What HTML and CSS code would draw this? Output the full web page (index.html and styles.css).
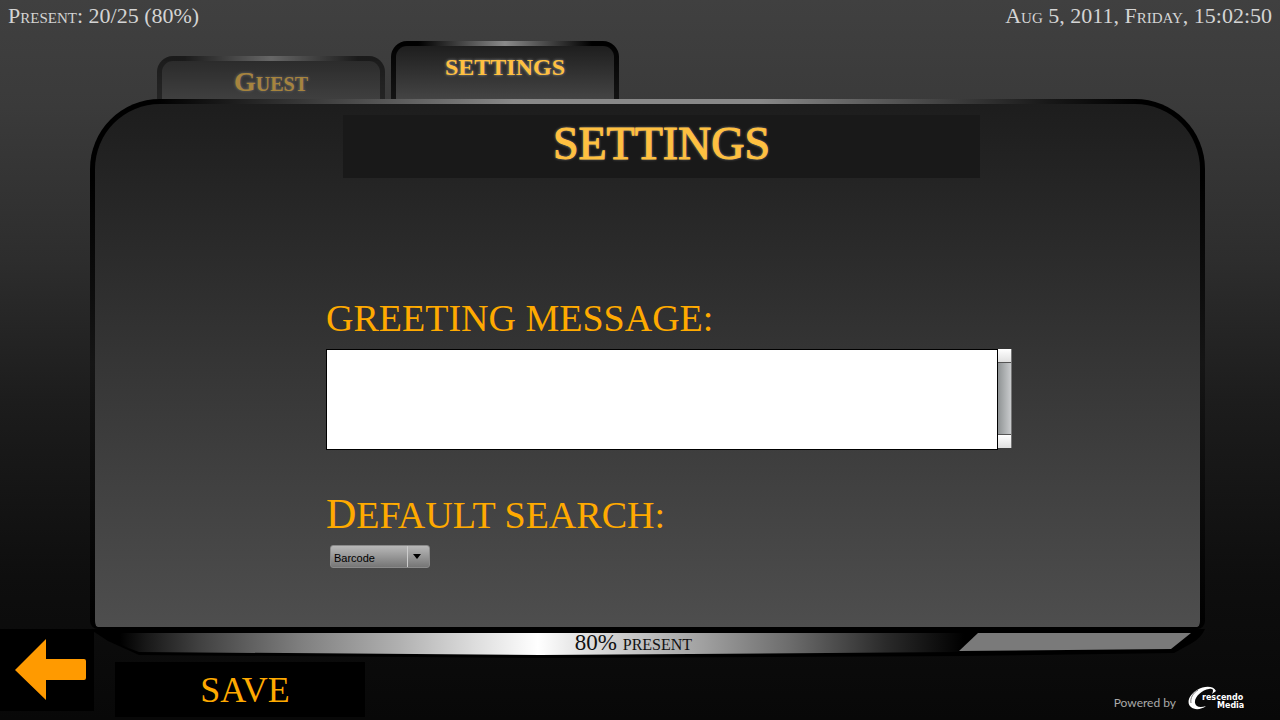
FILE: index.html
```
<!DOCTYPE html>
<html lang="en">

<head>
  <meta charset="UTF-8">
  <meta name="viewport" content="width=device-width, initial-scale=1.0">

  <title>Settings</title>
  <link rel="stylesheet" href="styles.css">
</head>

<body>

  <header class="topbar">
    <span>Present: 20/25 (80%)</span>
    <span>Aug 5, 2011, Friday, 15:02:50</span>
  </header>

  <main class="content">
    <nav class="tabs">
      <a href="#guest" class="tab">Guest</a>
      <a href="#settings" class="tab active">Settings</a>
    </nav>

    <form class="panel" id="settings">
      <h1 class="title">Settings</h1>

      <label for="greeting" class="greeting-label">Greeting message:</label>
      <div class="message">
        <textarea id="greeting" name="greeting"></textarea>
        <div class="scroll">
          <button type="button" class="scroll-but" aria-label="Scroll up"></button>
          <div class="scroll-track"></div>
          <button type="button" class="scroll-but" aria-label="Scroll down"></button>
        </div>
      </div>

      <label for="search" class="search-label">Default search:</label>
      <div class="dropdown">
        <select id="search" name="search">
          <option>Barcode</option>
        </select>
      </div>
    </form>
  </main>

  <footer class="bottom">
    <button type="button" class="back" aria-label="Back">
      <svg width="72" height="62" viewBox="0 0 72 62">
        <path d="M1 31 L32 0 V20 H70 Q72 20 72 22 V39 Q72 41 70 41 H32 V61 Z" fill="#ff9a00" />
      </svg>
    </button>

    <div class="bottom-main">
      <div class="status">
        <svg class="status-bar" viewBox="0 0 1111 30" preserveAspectRatio="none">
          <defs>
            <linearGradient id="shine" gradientUnits="userSpaceOnUse" x1="0" y1="0" x2="870" y2="0">
              <stop offset="0.03" stop-color="#000" />
              <stop offset="0.06" stop-color="#181818" />
              <stop offset="0.12" stop-color="#404040" />
              <stop offset="0.24" stop-color="#808080" />
              <stop offset="0.35" stop-color="#b0b0b0" />
              <stop offset="0.44" stop-color="#dedede" />
              <stop offset="0.51" stop-color="#fff" />
              <stop offset="0.56" stop-color="#e2e2e2" />
              <stop offset="0.7" stop-color="#a0a0a0" />
              <stop offset="0.8" stop-color="#6c6c6c" />
              <stop offset="0.91" stop-color="#2a2a2a" />
              <stop offset="1" stop-color="#000" />
            </linearGradient>
          </defs>
          <path d="M-4 0 H1111 Q1107 9 1098 14 L1080 24 L866 27 L446 29 L45 26 L14 12 Z" fill="#000" />
          <path d="M8 4 H884 L865 23 L446 26 L45 23 Q24 16 8 4 Z" fill="url(#shine)" />
          <path d="M884 4 H1097 L1077 20 L865 22 Z" fill="#7a7a7a" />
        </svg>
        <span class="status-text">80% present</span>
      </div>

      <div class="actions">
        <button type="submit" form="settings" class="save">Save</button>
        <div class="powered">
          <span>Powered by</span>
          <svg width="58" height="24" viewBox="0 0 58 24">
            <path d="M28 5 C26 0 17 -1 9 4 C1 9 -2 17 3 21 C6 24 13 24 18 20 C12 22 8 21 7 17 C6 11 14 4 21 3 C25 2 26 4 24 8 Z" fill="#fff" />
            <path d="M10 4 C5 7 2 12 3 17" fill="none" stroke="#777" stroke-width="1" />
            <text x="14" y="14" class="logo-text">rescendo</text>
            <text x="29" y="22" class="logo-text">Media</text>
          </svg>
        </div>
      </div>
    </div>
  </footer>

</body>

</html>
```
FILE: styles.css
```
* {
  margin: 0;
  padding: 0;
  box-sizing: border-box;
}

body {
  display: flex;
  flex-direction: column;
  min-height: 100vh;
  background: #080808 linear-gradient(#404040, #3a3a3a 15%, #2d2d2d 36%, #1c1c1c 56%, #0e0e0e 80%, #080808);
  font-family: "Liberation Serif", "Times New Roman", serif;
  color: #ffaa00;
}

button {
  border: none;
  font-family: inherit;
  color: inherit;
  cursor: pointer;
}

.topbar {
  display: flex;
  justify-content: space-between;
  padding: 4px 8px 0;
  height: 41px;
  font-size: 22px;
  line-height: 24px;
  font-variant: small-caps;
  color: #d4d4d4;
}

.content {
  flex: 1;
  display: flex;
  flex-direction: column;
  margin: 0 75px 0 90px;
}

/* tabs */
.tabs {
  display: flex;
  align-items: flex-end;
  gap: 6px;
  height: 58px;
  padding-left: 67px;
}

.tab {
  width: 228px;
  height: 43px;
  padding-top: 6px;
  border: 5px solid transparent;
  border-bottom: none;
  border-radius: 16px 16px 0 0;
  background:
    linear-gradient(#1e1e1e, #444) padding-box,
    linear-gradient(to right, #000 12%, #8a8a8a 50%, #000 88%) top / 100% 5px no-repeat border-box,
    linear-gradient(#000, #141414) border-box;
  font-size: 28px;
  line-height: 30px;
  font-weight: bold;
  font-variant: small-caps;
  text-align: center;
  text-decoration: none;
  color: #ffc040;
  text-shadow: 0 0 3px #999;
  opacity: 0.55;
}

.tab.active {
  height: 58px;
  font-size: 24px;
  font-variant: normal;
  text-transform: uppercase;
  opacity: 1;
}

/* main panel */
.panel {
  flex: 1;
  display: flex;
  flex-direction: column;
  padding: 11px 188px 20px 231px;
  border: 5px solid transparent;
  border-bottom-width: 2px;
  border-radius: 70px 70px 8px 8px;
  background:
    linear-gradient(#1d1d1d, #4e4e4e) padding-box,
    linear-gradient(to right, #000 6%, #888 38%, #888 60%, #181818 86%, #000 94%) top / 100% 5px no-repeat border-box,
    linear-gradient(#000 15%, #151515 50%, #000) border-box;
}

.title {
  height: 63px;
  margin: 0 32px 120px 17px;
  background-color: #191919;
  font-size: 46px;
  line-height: 58px;
  font-weight: normal;
  text-transform: uppercase;
  text-align: center;
  color: #ffc040;
  -webkit-text-stroke: 1px #ffc040;
  text-shadow: 0 0 3px #aaa;
}

.greeting-label,
.search-label {
  font-size: 38px;
  line-height: 40px;
  text-transform: uppercase;
}

.greeting-label {
  margin-bottom: 11px;
}

.search-label {
  margin-bottom: 10px;
}

.search-label::first-letter {
  font-size: 42px;
}

.message {
  display: flex;
  align-items: flex-start;
  margin-bottom: 44px;
}

textarea {
  flex: 1;
  height: 101px;
  padding: 4px;
  border: 1px solid #000;
  background-color: #fff;
  font-size: 22px;
  resize: none;
  outline: none;
}

.scroll {
  display: flex;
  flex-direction: column;
  width: 14px;
  height: 99px;
  border-right: 1px solid #777;
}

.scroll-but {
  height: 13px;
  background: linear-gradient(#fff, #e0e0e0);
}

.scroll-track {
  flex: 1;
  border: 1px solid #555;
  border-width: 1px 0;
  background: linear-gradient(to right, #8f9394, #c9cbcd);
}

.dropdown {
  position: relative;
  width: 100px;
  margin-left: 4px;
}

.dropdown::after {
  content: "";
  position: absolute;
  top: 9px;
  right: 9px;
  border: 4px solid transparent;
  border-top: 5px solid #000;
  border-bottom: none;
  pointer-events: none;
}

select {
  display: block;
  width: 100%;
  height: 23px;
  padding: 3px 3px 0;
  border: 1px solid #8a8a8a;
  border-radius: 3px;
  appearance: none;
  background:
    linear-gradient(#ccc, #ccc) 76px 0 / 1px 100% no-repeat,
    linear-gradient(#b8b8b8, #767676);
  font-family: "Liberation Sans", Arial, sans-serif;
  font-size: 11px;
  color: #000;
}

/* bottom strip */
.bottom {
  display: flex;
  align-items: flex-start;
  height: 91px;
}

.back {
  display: flex;
  align-items: center;
  justify-content: flex-end;
  width: 94px;
  height: 82px;
  padding-right: 8px;
  background-color: #000;
}

.bottom-main {
  flex: 1;
}

.status {
  display: grid;
  margin-right: 75px;
  height: 30px;
}

.status-bar,
.status-text {
  grid-area: 1 / 1;
  width: 100%;
}

.status-bar {
  height: 30px;
}

.status-text {
  padding: 1px 32px 0 0;
  font-size: 23px;
  line-height: 26px;
  font-variant: small-caps;
  text-align: center;
  color: #111;
}

.actions {
  display: flex;
  justify-content: space-between;
  padding: 3px 34px 0 21px;
}

.save {
  width: 250px;
  height: 55px;
  padding-left: 10px;
  background-color: #000;
  font-size: 36px;
  text-transform: uppercase;
}

.powered {
  display: flex;
  align-items: flex-end;
  gap: 12px;
  height: 48px;
  font-family: Lato, sans-serif;
  font-size: 12px;
  line-height: 14px;
  color: #aaa;
}

.logo-text {
  font-family: "DejaVu Sans", sans-serif;
  font-size: 8px;
  font-weight: bold;
  fill: #fff;
}
```
